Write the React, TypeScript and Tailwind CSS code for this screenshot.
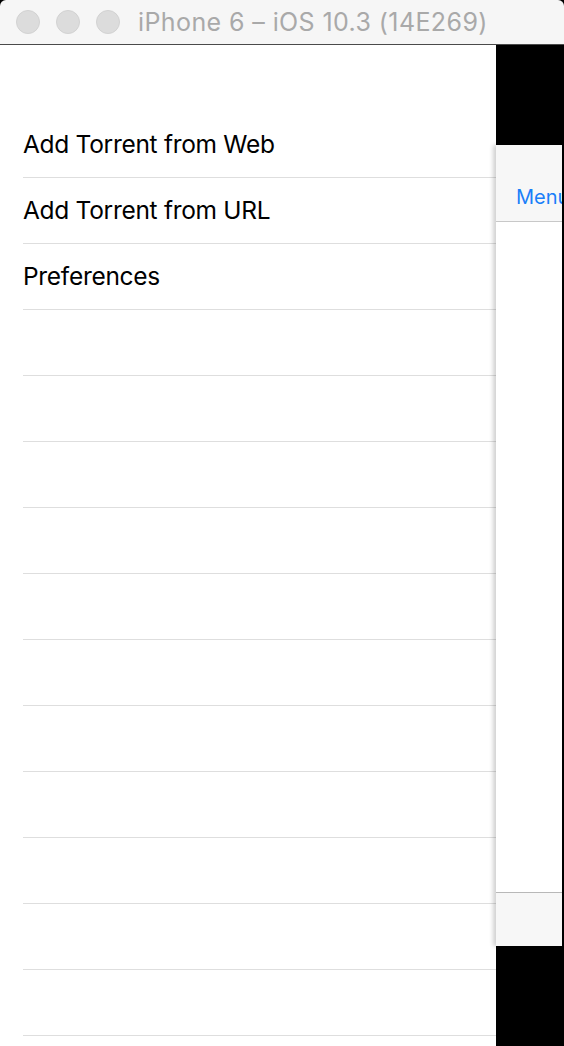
import React from "react";

const items = ["Add Torrent from Web", "Add Torrent from URL", "Preferences"];

export default function App() {
  const rows = Array.from({ length: 14 }, (_, i) => items[i] ?? "");
  return (
    <div className="w-[564px] h-[1046px] overflow-hidden flex flex-col bg-black" style={{ fontFamily: "Inter, 'Liberation Sans', sans-serif" }}>
      {/* Title bar */}
      <div className="h-[45px] shrink-0 bg-[#f6f6f6] border-b border-[#4a4a4a] flex items-center rounded-t-[6px]">
        <div className="flex gap-[16px] pl-[16px]">
          <span className="w-[24px] h-[24px] rounded-full bg-[#dcdcdc] border border-[#d2d2d2]" />
          <span className="w-[24px] h-[24px] rounded-full bg-[#dcdcdc] border border-[#d2d2d2]" />
          <span className="w-[24px] h-[24px] rounded-full bg-[#dcdcdc] border border-[#d2d2d2]" />
        </div>
        <span className="ml-[18px] text-[25px] text-[#a9a9a9] tracking-[0.4px] leading-none">iPhone 6 – iOS 10.3 (14E269)</span>
      </div>
      {/* Body */}
      <div className="flex flex-1 min-h-0 bg-black">
        {/* Left menu */}
        <div className="w-[496px] shrink-0 bg-white pt-[67px]">
          {rows.map((t, i) => (
            <div key={i} className="ml-[23px] h-[66px] border-b border-[#dedede] flex items-center text-[24.5px] text-black tracking-[-0.3px] leading-none">
              {t}
            </div>
          ))}
        </div>
        {/* Right pushed content */}
        <div className="flex-1 flex flex-col pt-[100px] pr-[2px] relative">
          <div className="w-[66px] h-[801px] flex flex-col bg-white shadow-[-3px_0_4px_rgba(0,0,0,0.18)]">
            <div className="h-[77px] bg-[#f7f7f7] border-b border-[#c8c8c8] flex items-end pb-[14px] pl-[20px] overflow-hidden">
              <span className="text-[20px] text-[#1a7ff9] leading-none whitespace-nowrap">Menu</span>
            </div>
            <div className="flex-1 bg-white" />
            <div className="h-[54px] bg-[#f7f7f7] border-t border-[#b8b8b8]" />
          </div>
        </div>
      </div>
    </div>
  );
}
